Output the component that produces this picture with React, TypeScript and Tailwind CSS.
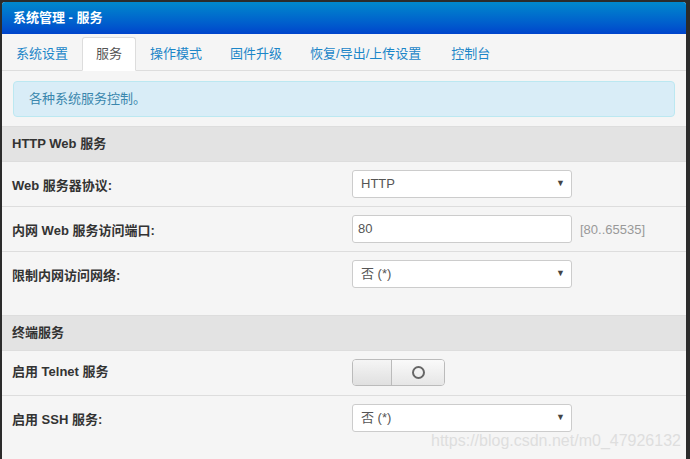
import React from 'react';

const tabs = ['系统设置', '服务', '操作模式', '固件升级', '恢复/导出/上传设置', '控制台'];

function Select({ value }: { value: string }) {
  return (
    <div className="w-[220px] h-[28px] bg-white border border-[#ccc] rounded-[3px] flex items-center justify-between pl-[8px] pr-[6px] text-[13px] text-[#555]">
      <span>{value}</span>
      <span className="text-[9px] text-[#444]">▼</span>
    </div>
  );
}

function Row({ label, children, tall, labelTop = 'pt-[14px]' }: { label: string; children: React.ReactNode; tall?: boolean; labelTop?: string }) {
  return (
    <div className={`flex border-b border-[#ddd] ${tall ? 'h-[64px]' : 'h-[45px]'}`}>
      <div className={`w-[350px] shrink-0 pl-[10px] ${labelTop} font-bold text-[13px] text-[#333]`}>{label}</div>
      <div className="flex items-start pt-[8px] gap-[8px]">{children}</div>
    </div>
  );
}

function SectionHead({ title }: { title: string }) {
  return (
    <div className="h-[35px] bg-[#e3e3e3] border-b border-[#ddd] flex items-center pl-[10px] font-bold text-[13px] text-[#333]">
      {title}
    </div>
  );
}

export default function App() {
  return (
    <div
      className="w-[690px] h-[459px] bg-[#2b2b2b] pt-[2px] pl-[2px] pr-[4px] overflow-hidden"
      style={{ fontFamily: '"Liberation Sans", "Noto Sans CJK SC", sans-serif' }}
    >
      <div className="relative bg-[#f5f5f5] h-full rounded-t-[3px] overflow-hidden">
        {/* Header */}
        <div className="h-[32px] bg-gradient-to-b from-[#0088cc] to-[#0044cc] flex items-center pl-[11px] text-white font-bold text-[13px]">
          系统管理 - 服务
        </div>

        {/* Tabs */}
        <div className="h-[37px] flex items-end border-b border-[#ddd]">
          {tabs.map((t, i) => (
            <div
              key={t}
              className={`h-[34px] flex items-center px-[13px] text-[13px] rounded-t-[3px] mb-[-1px] ${
                i === 1
                  ? 'bg-white border border-[#ddd] border-b-white text-[#555] px-[12px]'
                  : 'text-[#1c86c8] border border-transparent'
              } ${i === 4 ? 'mr-[2px]' : ''}`}
            >
              {t}
            </div>
          ))}
        </div>

        {/* Alert */}
        <div className="mx-[11px] mt-[10px] mb-[9px] h-[36px] bg-[#d9edf7] border border-[#bce8f1] rounded-[4px] flex items-center pl-[15px] text-[13px] text-[#3a87ad]">
          各种系统服务控制。
        </div>

        <div className="border-t border-[#ddd]">
          <SectionHead title="HTTP Web 服务" />
          <Row label="Web 服务器协议:">
            <Select value="HTTP" />
          </Row>
          <Row label="内网 Web 服务访问端口:">
            <div className="w-[220px] h-[28px] bg-white border border-[#ccc] rounded-[3px] flex items-center pl-[5px] text-[13px] text-[#555]">
              80
            </div>
            <span className="text-[13px] text-[#999] pt-[5px]">[80..65535]</span>
          </Row>
          <Row label="限制内网访问网络:" tall>
            <Select value="否 (*)" />
          </Row>

          <SectionHead title="终端服务" />
          <Row label="启用 Telnet 服务" labelTop="pt-[11px]">
            <div className="w-[93px] h-[27px] flex border border-[#bbb] rounded-[4px] overflow-hidden">
              <div className="w-[39px] bg-gradient-to-b from-[#f5f5f5] to-[#e0e0e0] border-r border-[#bbb] shadow-[1px_0_2px_rgba(0,0,0,0.15)]" />
              <div className="flex-1 bg-gradient-to-b from-[#fafafa] to-[#e6e6e6] flex items-center justify-center">
                <div className="w-[13px] h-[13px] rounded-full border-2 border-[#666]" />
              </div>
            </div>
          </Row>
          <Row label="启用 SSH 服务:" tall>
            <Select value="否 (*)" />
          </Row>
        </div>

        {/* watermark */}
        <div className="absolute left-[429px] top-[427px] whitespace-nowrap text-[16px] text-[#dedede]">
          https://blog.csdn.net/m0_47926132
        </div>
      </div>
    </div>
  );
}
